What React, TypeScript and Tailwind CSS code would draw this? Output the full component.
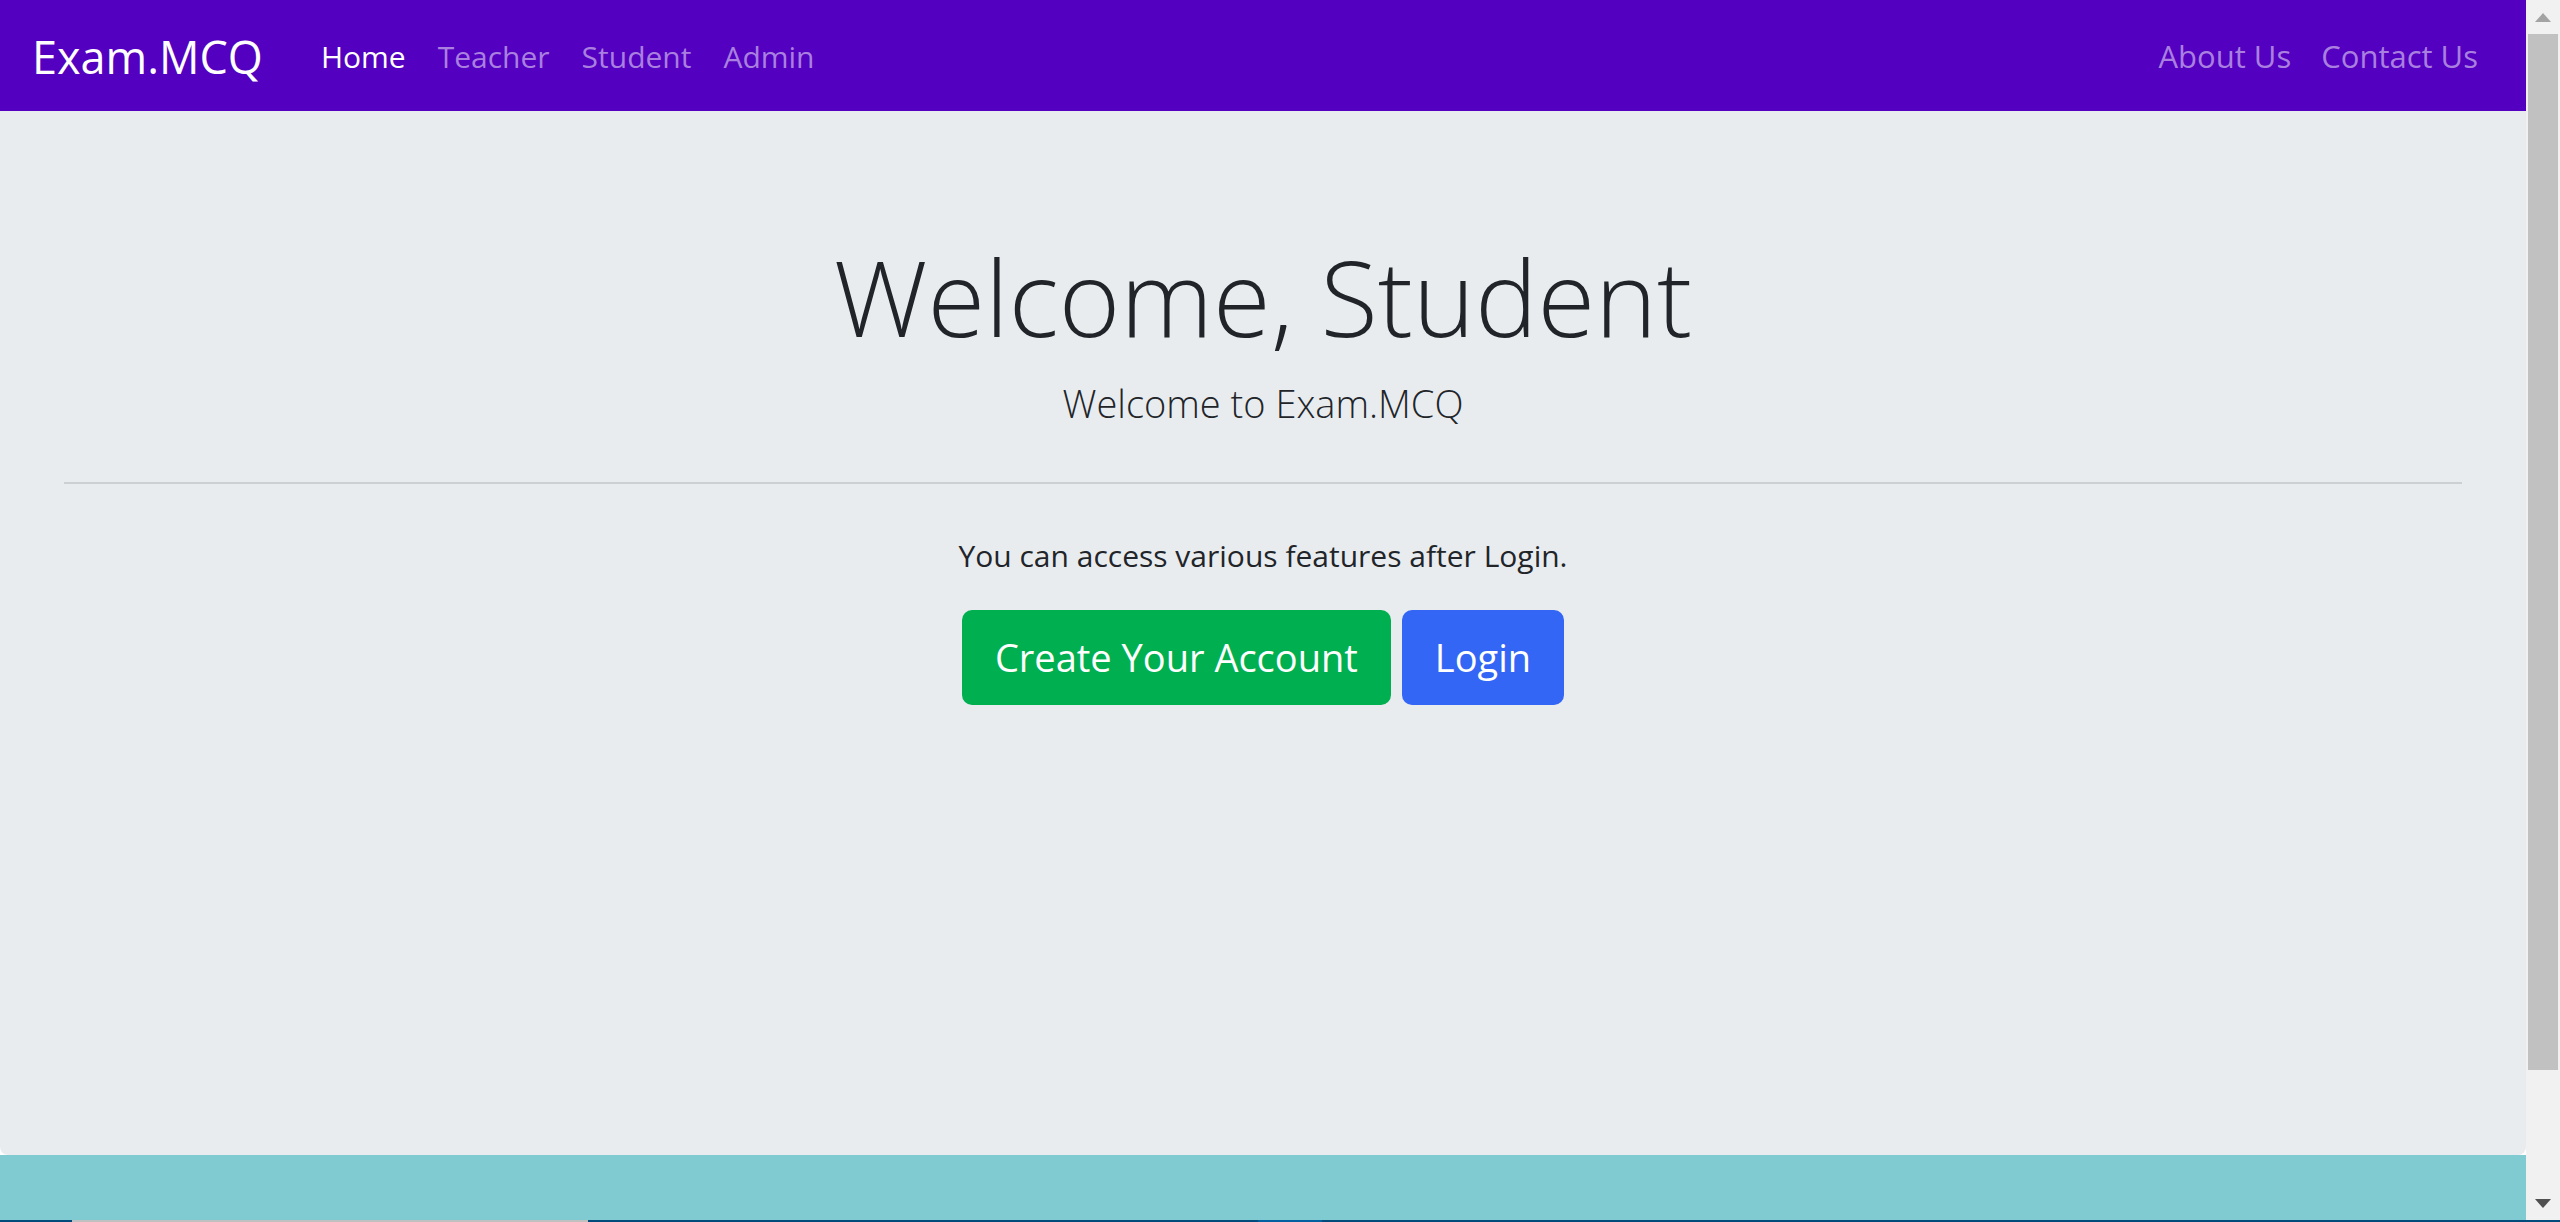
import React from "react";

export default function App() {
  const font = { fontFamily: "'Open Sans', 'Noto Sans', sans-serif" };
  return (
    <div className="w-[2560px] h-[1222px] flex flex-col overflow-hidden bg-white" style={font}>
      <div className="flex flex-1 min-h-0">
        <div className="flex-1 flex flex-col min-w-0">
          <nav className="h-[111px] shrink-0 bg-[#5300c0] flex items-center pl-[32px] pr-[33px]">
            <span className="text-[45px] text-white leading-none mr-[58px] mt-[2px]">Exam.MCQ</span>
            <div className="flex items-center gap-[32px] text-[30px] leading-none mt-[2px]">
              <span className="text-white">Home</span>
              <span className="text-[#a97fdf]">Teacher</span>
              <span className="text-[#a97fdf]">Student</span>
              <span className="text-[#a97fdf]">Admin</span>
            </div>
            <div className="ml-auto flex items-center gap-[30px] text-[31px] leading-none pr-[15px] mt-[2px]">
              <span className="text-[#a97fdf]">About Us</span>
              <span className="text-[#a97fdf]">Contact Us</span>
            </div>
          </nav>
          <main className="flex-1 bg-[#e9ecef] rounded-b-[8px] flex flex-col items-center px-[64px] pt-[123px] text-[#212529]">
            <h1 className="text-[105px] font-light leading-[1.2] m-0">Welcome, Student</h1>
            <p className="text-[38px] font-light leading-[1.5] mt-[15px]">Welcome to Exam.MCQ</p>
            <hr className="w-full border-0 border-t-2 border-[#cdd0d3] mt-[50px] mb-0" />
            <p className="text-[30px] leading-[1.5] mt-[49px]">You can access various features after Login.</p>
            <div className="flex gap-[11px] mt-[32px]">
              <button className="h-[95px] px-[33px] rounded-[10px] bg-[#00b050] text-white text-[38px]">Create Your Account</button>
              <button className="h-[95px] px-[33px] rounded-[10px] bg-[#3366f5] text-white text-[38px]">Login</button>
            </div>
          </main>
          <footer className="h-[65px] shrink-0 bg-[#80cbd2] overflow-hidden flex justify-center">
            <span className="text-white text-[30px] leading-none mt-[62px]">Made in India with love</span>
          </footer>
        </div>
        <div className="w-[34px] shrink-0 bg-[#f1f1f1] flex flex-col items-center">
          <div className="h-[34px] flex items-center justify-center">
            <svg width="16" height="9" viewBox="0 0 16 9"><polygon points="8,0 16,9 0,9" fill="#a3a3a3" /></svg>
          </div>
          <div className="w-[30px] flex-1 bg-[#c1c1c1]" />
          <div className="h-[150px] flex items-end justify-center pb-[12px]">
            <svg width="16" height="9" viewBox="0 0 16 9"><polygon points="0,0 16,0 8,9" fill="#505050" /></svg>
          </div>
        </div>
      </div>
      <div className="h-[2px] shrink-0 flex bg-[#004a7c]">
        <div className="w-[72px]" />
        <div className="w-[516px] bg-[#c0c0c0]" />
        <div className="w-[670px]" />
        <div className="w-[64px] bg-[#0060a0]" />
      </div>
    </div>
  );
}
